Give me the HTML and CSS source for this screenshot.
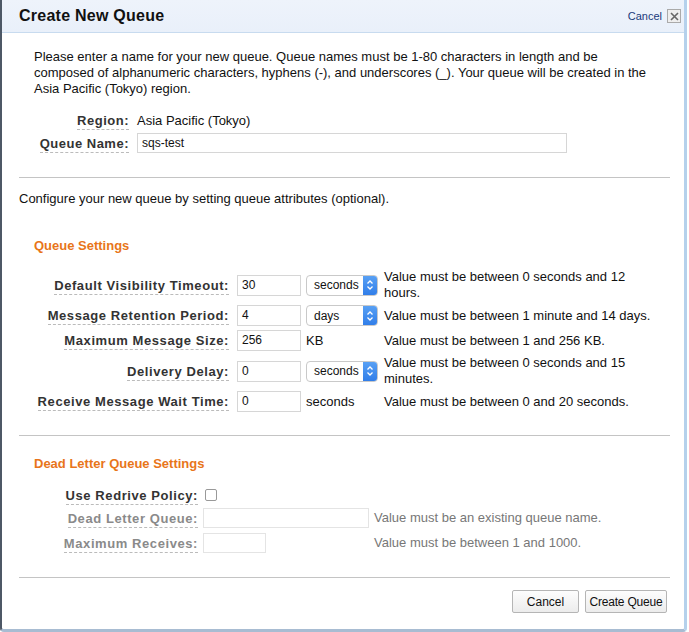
FILE: index.html
```html
<!DOCTYPE html>
<html>
<head>
<meta charset="utf-8">
<link rel="stylesheet" href="styles.css">
</head>
<body>
<div class="dialog">
  <div class="header">
    <h1 class="title">Create New Queue</h1>
    <div class="close">
      <a class="cancel-link">Cancel</a>
      <span class="xbtn"><svg width="9" height="9" viewBox="0 0 9 9"><path d="M1 1L8 8M8 1L1 8" stroke="#666" stroke-width="1.6"/></svg></span>
    </div>
  </div>
  <div class="body">
    <p class="intro">Please enter a name for your new queue. Queue names must be 1-80 characters in length and be composed of alphanumeric characters, hyphens (-), and underscores (_). Your queue will be created in the Asia Pacific (Tokyo) region.</p>
    <div class="basic">
      <div class="lcell"><span class="lbl">Region:</span></div>
      <div class="val">Asia Pacific (Tokyo)</div>
      <div class="lcell"><span class="lbl">Queue Name:</span></div>
      <div><div class="input wide">sqs-test</div></div>
    </div>
    <hr class="rule">
    <p class="configure">Configure your new queue by setting queue attributes (optional).</p>
    <h2 class="section">Queue Settings</h2>
    <div class="settings">
      <div class="lcell"><span class="lbl">Default Visibility Timeout:</span></div>
      <div class="input num">30</div>
      <div class="select"><span>seconds</span><span class="arrows"><svg width="8" height="12" viewBox="0 0 8 12"><path d="M1.5 4.5L4 2L6.5 4.5M1.5 7.5L4 10L6.5 7.5" fill="none" stroke="#fff" stroke-width="1.3"/></svg></span></div>
      <div class="help">Value must be between 0 seconds and 12 hours.</div>

      <div class="lcell"><span class="lbl">Message Retention Period:</span></div>
      <div class="input num">4</div>
      <div class="select"><span>days</span><span class="arrows"><svg width="8" height="12" viewBox="0 0 8 12"><path d="M1.5 4.5L4 2L6.5 4.5M1.5 7.5L4 10L6.5 7.5" fill="none" stroke="#fff" stroke-width="1.3"/></svg></span></div>
      <div class="help">Value must be between 1 minute and 14 days.</div>

      <div class="lcell"><span class="lbl">Maximum Message Size:</span></div>
      <div class="input num">256</div>
      <div class="unit">KB</div>
      <div class="help">Value must be between 1 and 256 KB.</div>

      <div class="lcell"><span class="lbl">Delivery Delay:</span></div>
      <div class="input num">0</div>
      <div class="select"><span>seconds</span><span class="arrows"><svg width="8" height="12" viewBox="0 0 8 12"><path d="M1.5 4.5L4 2L6.5 4.5M1.5 7.5L4 10L6.5 7.5" fill="none" stroke="#fff" stroke-width="1.3"/></svg></span></div>
      <div class="help">Value must be between 0 seconds and 15 minutes.</div>

      <div class="lcell"><span class="lbl">Receive Message Wait Time:</span></div>
      <div class="input num">0</div>
      <div class="unit">seconds</div>
      <div class="help">Value must be between 0 and 20 seconds.</div>
    </div>
    <hr class="rule rule2">
    <h2 class="section section2">Dead Letter Queue Settings</h2>
    <div class="dlq">
      <div class="lcell"><span class="lbl">Use Redrive Policy:</span></div>
      <div class="chkcell"><span class="check"></span></div>
      <div></div>

      <div class="lcell"><span class="lbl dim">Dead Letter Queue:</span></div>
      <div class="input dq"></div>
      <div class="help dimhelp">Value must be an existing queue name.</div>

      <div class="lcell"><span class="lbl dim">Maximum Receives:</span></div>
      <div class="input mr"></div>
      <div class="help dimhelp">Value must be between 1 and 1000.</div>
    </div>
    <hr class="rule rule3">
    <div class="buttons">
      <button class="btn btn-cancel">Cancel</button>
      <button class="btn btn-create">Create Queue</button>
    </div>
  </div>
</div>
</body>
</html>
```
FILE: styles.css
```css
html, body {
  margin: 0;
  padding: 0;
  background: #fff;
}
body {
  font-family: "Liberation Sans", Arial, sans-serif;
  font-size: 13px;
  color: #111;
}
.dialog {
  width: 682px;
  height: 629px;
  border-left: 2px solid #4d5866;
  border-right: 3px solid #b5d1ec;
  border-bottom: 3px solid #a8bcd2;
  border-radius: 0 0 4px 4px;
  box-sizing: content-box;
  background: #fff;
  position: relative;
}
.header {
  height: 32px;
  background: linear-gradient(#eef3fb, #e9f0fa);
  border-bottom: 1px solid #c8dbef;
  display: flex;
  align-items: center;
  justify-content: space-between;
  padding: 0 3px 0 17px;
}
.title {
  margin: 0;
  font-size: 16px;
  font-weight: bold;
  color: #111;
  letter-spacing: 0.25px;
}
.close {
  display: flex;
  align-items: center;
  gap: 5px;
}
.cancel-link {
  font-size: 11px;
  color: #1a3a7a;
}
.xbtn {
  width: 12px;
  height: 12px;
  border: 1px solid #aaa;
  background: #eee;
  display: flex;
  align-items: center;
  justify-content: center;
}
.body {
  padding: 0 14px 0 17px;
}
.intro {
  margin: 16px 0 0 15px;
  line-height: 16px;
  width: 620px;
}
.basic {
  display: grid;
  grid-template-columns: 110px 1fr;
  column-gap: 8px;
  row-gap: 5px;
  margin-top: 16px;
  align-items: center;
}
.lcell {
  text-align: right;
}
.lbl {
  font-weight: bold;
  color: #333;
  border-bottom: 1px dashed #bbb;
  padding-bottom: 1px;
  letter-spacing: 0.5px;
}
.settings .lbl, .dlq .lbl {
  letter-spacing: 0.58px;
}
.lbl.dim {
  color: #8a8a8a;
}
.val {
  color: #111;
}
.input {
  height: 18px;
  border: 1px solid #d6d6d6;
  background: #fff;
  font-size: 12px;
  line-height: 18px;
  padding: 0 4px;
  box-sizing: content-box;
  color: #111;
}
.input.wide {
  width: 420px;
}
.rule {
  border: 0;
  border-top: 1px solid #c4c4c4;
  margin: 24px 0 0 0;
}
.configure {
  margin: 13px 0 0 0;
}
.section {
  margin: 32px 0 0 15px;
  font-size: 13px;
  font-weight: bold;
  color: #e8751a;
}
.settings {
  display: grid;
  grid-template-columns: 195px 64px 72px 291px;
  grid-auto-rows: minmax(21px, auto);
  row-gap: 4px;
  align-items: center;
  margin-top: 16px;
  margin-left: 15px;
}
.settings .input.num {
  height: 19px;
  line-height: 19px;
  margin-left: 8px;
  width: 54px;
}
.select {
  height: 21px;
  width: 72px;
  box-sizing: border-box;
  border: 1px solid #c9c9c9;
  border-radius: 4px;
  display: flex;
  align-items: center;
  justify-content: space-between;
  padding-left: 7px;
  font-size: 12px;
  overflow: hidden;
  background: #fff;
  margin-left: 13px;
}
.arrows {
  width: 14px;
  height: 21px;
  background: linear-gradient(#5aa2f5, #2f7ce8);
  display: flex;
  align-items: center;
  justify-content: center;
}
.unit {
  margin-left: 13px;
}
.help {
  line-height: 16px;
  padding-left: 19px;
}
.rule2 {
  margin-top: 23px;
}
.section2 {
  margin-top: 20px;
}
.dlq {
  display: grid;
  grid-template-columns: 164px 166px 300px;
  column-gap: 5px;
  row-gap: 5px;
  align-items: center;
  margin-top: 16px;
  margin-left: 15px;
}
.dlq .help {
  padding-left: 0;
}
.chkcell {
  height: 16px;
  display: flex;
  align-items: center;
}
.check {
  width: 10px;
  height: 10px;
  border: 1px solid #999;
  border-radius: 2px;
  margin-left: 2px;
}
.input.dq {
  width: 156px;
  border-color: #e4e4e4;
}
.input.mr {
  width: 53px;
  border-color: #e4e4e4;
}
.dimhelp {
  color: #777;
}
.rule3 {
  margin-top: 24px;
}
.buttons {
  display: flex;
  justify-content: flex-end;
  gap: 6px;
  margin-top: 12px;
  padding-right: 3px;
}
.btn {
  font-family: "Liberation Sans", Arial, sans-serif;
  font-size: 12px;
  height: 23px;
  padding: 0;
  border: 1px solid #b5b5b5;
  border-radius: 2px;
  background: linear-gradient(#fdfdfd, #ececec);
  color: #111;
}
.btn-cancel {
  width: 67px;
}
.btn-create {
  width: 82px;
  letter-spacing: -0.2px;
}
```
